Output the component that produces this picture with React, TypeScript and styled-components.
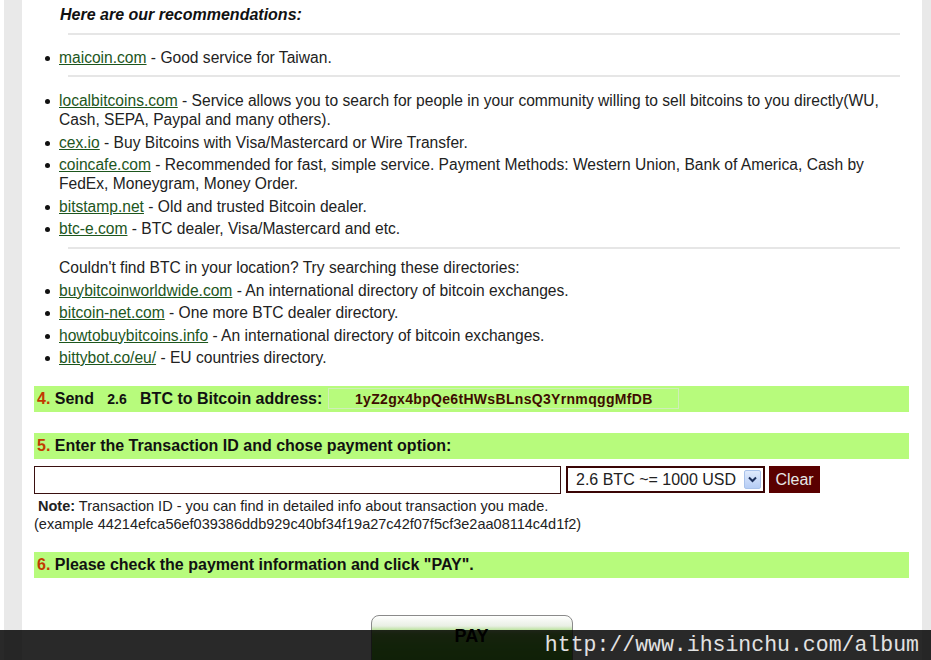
import styled, { createGlobalStyle } from 'styled-components';

const GREEN_BAR = '#b7fb7c';
const MAROON = '#5a0000';

const GlobalStyle = createGlobalStyle`
    html, body {
        margin: 0;
        padding: 0;
        background: #ffffff;
    }
    body {
        font-family: 'Liberation Sans', Arial, sans-serif;
        color: #222;
    }
`;

const Page = styled.div`
    width: 931px;
    height: 660px;
    overflow: hidden;
    position: relative;
    box-sizing: border-box;
    padding-left: 4px;
    background: #ffffff;
`;

const Shell = styled.div`
    height: 100%;
    box-sizing: border-box;
    padding: 0 9px 0 18px;
    background: #e9e9e9;
`;

const Panel = styled.div`
    height: 100%;
    background: #ffffff;
    padding-top: 5px;
    box-sizing: border-box;
`;

const Recommendations = styled.div`
    padding-left: 37px;
    padding-right: 22px;
    font-size: 15.6px;
    line-height: 19px;
`;

const Heading = styled.div`
    font-size: 16px;
    font-weight: bold;
    font-style: italic;
    color: #111;
    padding-left: 1px;
`;

const Divider = styled.hr<{ $top: number; $bottom: number }>`
    border: none;
    height: 2px;
    background: #e6e6e6;
    margin: ${(p) => p.$top}px 0 ${(p) => p.$bottom}px 9px;
`;

const List = styled.ul`
    margin: 0;
    padding: 0;
    list-style: none;
`;

const Item = styled.li`
    position: relative;
    margin-bottom: 3.5px;
    &:last-child {
        margin-bottom: 0;
    }
    &::before {
        content: '';
        position: absolute;
        left: -14px;
        top: 8px;
        width: 5px;
        height: 5px;
        border-radius: 50%;
        background: #111;
    }
`;

const Link = styled.a`
    color: #1d561d;
    text-decoration: underline;
`;

const Plain = styled.div`
    margin-bottom: 3.5px;
`;

const Steps = styled.div`
    margin-top: 18.5px;
    padding: 0 13px 0 12px;
`;

const Bar = styled.div<{ $gap: number }>`
    display: flex;
    align-items: center;
    height: 26px;
    margin-top: ${(p) => p.$gap}px;
    background: ${GREEN_BAR};
    padding-left: 3px;
    font-size: 16px;
    font-weight: bold;
    color: #111;
    white-space: pre;
`;

const Num = styled.span`
    color: #c23a00;
`;

const Amount = styled.span`
    font-size: 14px;
`;

const AddressBox = styled.div`
    width: 351px;
    height: 21px;
    margin-left: 6px;
    box-sizing: border-box;
    border: 1px solid #cfeeb8;
    display: flex;
    align-items: center;
    justify-content: center;
    font-size: 14px;
    font-weight: bold;
    color: #3e0c00;
    letter-spacing: 0.32px;
`;

const InputRow = styled.div`
    display: flex;
    align-items: center;
    gap: 5px;
    margin-top: 7px;
`;

const TxInput = styled.input`
    width: 527px;
    height: 28px;
    box-sizing: border-box;
    border: 1px solid #3a1010;
    outline: none;
    padding: 0 4px;
    font-family: 'Liberation Sans', Arial, sans-serif;
`;

const SelectWrap = styled.div`
    display: flex;
    align-items: center;
    width: 199px;
    height: 27px;
    box-sizing: border-box;
    border: 2px solid #3a0505;
    padding-right: 2px;
    background: #fff;
`;

const Select = styled.select`
    flex: 1;
    appearance: none;
    border: none;
    outline: none;
    background: transparent;
    font-family: 'Liberation Sans', Arial, sans-serif;
    font-size: 16px;
    color: #222;
    padding-left: 8px;
`;

const ArrowBtn = styled.span`
    width: 17px;
    height: 19px;
    box-sizing: border-box;
    border: 1px solid #a9c2ea;
    border-radius: 2px;
    background: linear-gradient(#dfeafc, #b6cdf5);
    display: flex;
    align-items: center;
    justify-content: center;
`;

const ClearButton = styled.button`
    height: 27px;
    width: 51px;
    border: none;
    background: ${MAROON};
    color: #e6e6e6;
    font-family: 'Liberation Sans', Arial, sans-serif;
    font-size: 16px;
    padding: 0;
    margin-left: -1px;
`;

const NoteText = styled.div`
    font-size: 14.5px;
    line-height: 18px;
    color: #222;
    margin-top: 3px;
    white-space: pre;
`;

const PayRow = styled.div`
    display: flex;
    justify-content: center;
    margin-top: 37px;
`;

const PayButton = styled.button`
    width: 202px;
    height: 56px;
    border: 1px solid #8a8a8a;
    border-radius: 8px;
    background: linear-gradient(#ffffff 0px, #e9efe4 10px, #8fd65a 18px, #6fd23a 30px, #5cc02a 100%);
    font-family: 'Liberation Sans', Arial, sans-serif;
    font-size: 18px;
    font-weight: bold;
    color: #000;
    padding: 0 0 13px;
`;

const Watermark = styled.div`
    position: absolute;
    left: 0;
    right: 0;
    bottom: 0;
    height: 30px;
    background: rgba(0, 0, 0, 0.84);
    display: flex;
    align-items: center;
    justify-content: flex-end;
    padding-right: 12px;
    font-family: 'Liberation Mono', 'Courier New', monospace;
    font-size: 21.5px;
    color: #e2e2e2;
`;

const Chevron = () => (
    <svg width="9" height="7" viewBox="0 0 9 7">
        <path d="M1 1.5 L4.5 5 L8 1.5" fill="none" stroke="#1c2f5a" strokeWidth="2" />
    </svg>
);

const exchanges = [
    { href: 'localbitcoins.com', text: ' - Service allows you to search for people in your community willing to sell bitcoins to you directly(WU, Cash, SEPA, Paypal and many others).' },
    { href: 'cex.io', text: ' - Buy Bitcoins with Visa/Mastercard or Wire Transfer.' },
    { href: 'coincafe.com', text: ' - Recommended for fast, simple service. Payment Methods: Western Union, Bank of America, Cash by FedEx, Moneygram, Money Order.' },
    { href: 'bitstamp.net', text: ' - Old and trusted Bitcoin dealer.' },
    { href: 'btc-e.com', text: ' - BTC dealer, Visa/Mastercard and etc.' },
];

const directories = [
    { href: 'buybitcoinworldwide.com', text: ' - An international directory of bitcoin exchanges.' },
    { href: 'bitcoin-net.com', text: ' - One more BTC dealer directory.' },
    { href: 'howtobuybitcoins.info', text: ' - An international directory of bitcoin exchanges.' },
    { href: 'bittybot.co/eu/', text: ' - EU countries directory.' },
];

export default function App() {
    return (
        <>
            <GlobalStyle />
            <Page>
                <Shell>
                    <Panel>
                        <Recommendations>
                            <Heading>Here are our recommendations:</Heading>
                            <Divider $top={9} $bottom={13} />
                            <List>
                                <Item>
                                    <Link href="#">maicoin.com</Link> - Good service for Taiwan.
                                </Item>
                            </List>
                            <Divider $top={8} $bottom={14} />
                            <List>
                                {exchanges.map((e) => (
                                    <Item key={e.href}>
                                        <Link href="#">{e.href}</Link>
                                        {e.text}
                                    </Item>
                                ))}
                            </List>
                            <Divider $top={8.5} $bottom={9.5} />
                            <Plain>Couldn't find BTC in your location? Try searching these directories:</Plain>
                            <List>
                                {directories.map((e) => (
                                    <Item key={e.href}>
                                        <Link href="#">{e.href}</Link>
                                        {e.text}
                                    </Item>
                                ))}
                            </List>
                        </Recommendations>

                        <Steps>
                            <Bar $gap={0}>
                                <Num>4.</Num> Send   <Amount>2.6</Amount>   BTC to Bitcoin address:
                                <AddressBox>1yZ2gx4bpQe6tHWsBLnsQ3YrnmqggMfDB</AddressBox>
                            </Bar>

                            <Bar $gap={21}>
                                <Num>5.</Num> Enter the Transaction ID and chose payment option:
                            </Bar>
                            <InputRow>
                                <TxInput type="text" />
                                <SelectWrap>
                                    <Select defaultValue="1000">
                                        <option value="1000">2.6 BTC ~= 1000 USD</option>
                                    </Select>
                                    <ArrowBtn>
                                        <Chevron />
                                    </ArrowBtn>
                                </SelectWrap>
                                <ClearButton>Clear</ClearButton>
                            </InputRow>
                            <NoteText>
                                {' '}
                                <b>Note:</b> Transaction ID - you can find in detailed info about transaction you made.
                                {'\n'}(example 44214efca56ef039386ddb929c40bf34f19a27c42f07f5cf3e2aa08114c4d1f2)
                            </NoteText>

                            <Bar $gap={19}>
                                <Num>6.</Num> Please check the payment information and click "PAY".
                            </Bar>
                            <PayRow>
                                <PayButton>PAY</PayButton>
                            </PayRow>
                        </Steps>
                    </Panel>
                </Shell>
                <Watermark>http://www.ihsinchu.com/album</Watermark>
            </Page>
        </>
    );
}
